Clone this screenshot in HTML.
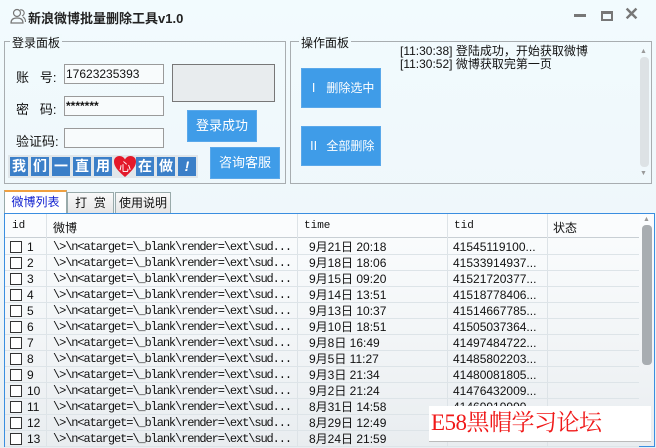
<!DOCTYPE html>
<html><head><meta charset="utf-8"><style>
*{margin:0;padding:0;box-sizing:border-box}
body{width:656px;height:448px;overflow:hidden;background:linear-gradient(180deg,#f2fbfe 0%,#eef6fa 60%,#e8eef2 100%);font-family:"Liberation Sans","Noto Sans CJK SC",sans-serif;font-size:12px;color:#111;position:relative}
.a{position:absolute}
.grp{position:absolute;border:1px solid #a8adb0}
.lg{position:absolute;top:-8px;left:8px;background:#f1fafd;padding:0 2px;font-size:12px}
.inp{position:absolute;height:20px;border:1px solid #9a9a9a;background:#f8fbfc;font-size:12px;line-height:18px;padding-left:1px}
.btn{position:absolute;background:#3f9ce8;color:#fff;font-size:12px;text-align:center;border:1px solid #5aa8ea}
.tile{position:absolute;top:157px;width:18px;height:19px;background:#3b7fc8;color:#fff;font-size:14px;font-weight:bold;text-align:center;line-height:19px}
.tab{position:absolute;top:192px;height:21px;border:1px solid #9aa;border-bottom:none;background:linear-gradient(#fafafa,#e6e6e6);font-size:12px;line-height:20px;text-align:center}
.row{position:absolute;left:5px;width:634px;height:16px;border-bottom:1px solid #dde4e8;font-size:12px;line-height:16px}
.row span{position:absolute;top:0;white-space:nowrap}
.row span.m{font-family:"Liberation Mono",monospace;letter-spacing:-1.1px}
.cb{position:absolute;left:5px;top:2px;width:12px;height:12px;border:1px solid #333;background:#fff}
</style></head><body>
<svg class="a" style="left:10px;top:8px" width="16" height="16" viewBox="0 0 16 16"><circle cx="7" cy="5" r="3.5" fill="none" stroke="#777" stroke-width="1.2"/><path d="M1 15c0-4 3-5 6-5s6 1 6 5z" fill="none" stroke="#777" stroke-width="1.2"/><path d="M10 2a3 3 0 0 1 2 6M13 9c2 1 2.5 3 2.5 5" fill="none" stroke="#777" stroke-width="1.1"/></svg>
<div class="a" style="left:28px;top:8px;font-size:13px;font-weight:bold;color:#222">新浪微博批量删除工具v1.0</div>
<div class="a" style="left:574px;top:14px;width:12px;height:3px;background:#777"></div>
<div class="a" style="left:601px;top:11px;width:12px;height:10px;border:2px solid #777;border-top-width:3px"></div>
<div class="a" style="left:624px;top:4px;font-size:18px;color:#777;font-weight:bold">✕</div>

<div class="grp" style="left:4px;top:41px;width:282px;height:143px"><div class="lg" style="left:5px">登录面板</div></div>
<div class="a" style="left:16px;top:67px;font-size:13px">账&nbsp;&nbsp;&nbsp;号:</div>
<div class="a" style="left:16px;top:99px;font-size:13px">密&nbsp;&nbsp;&nbsp;码:</div>
<div class="a" style="left:16px;top:131px;font-size:13px">验证码:</div>
<div class="inp" style="left:64px;top:64px;width:100px">17623235393</div>
<div class="inp" style="left:64px;top:96px;width:100px;font-weight:bold">*******</div>
<div class="inp" style="left:64px;top:128px;width:100px"></div>
<div class="a" style="left:172px;top:64px;width:103px;height:38px;border:1px solid #777;background:#e8ecee"></div>
<div class="btn" style="left:187px;top:110px;width:70px;height:32px;line-height:30px;font-size:13px">登录成功</div>
<div class="btn" style="left:210px;top:147px;width:70px;height:32px;line-height:30px;font-size:13px">咨询客服</div>
<div class="a" style="left:8px;top:155px;width:190px;height:23px;background:#e0e6ea"></div>
<div class="tile" style="left:10px">我</div><div class="tile" style="left:31px">们</div><div class="tile" style="left:52px">一</div><div class="tile" style="left:73px">直</div><div class="tile" style="left:94px">用</div>
<svg class="a" style="left:113px;top:154px" width="24" height="24" viewBox="0 0 24 24"><path d="M12 23C4 16 1 12 1 7.5 1 4 3.5 2 6.5 2 9 2 11 3.5 12 5.5 13 3.5 15 2 17.5 2 20.5 2 23 4 23 7.5 23 12 20 16 12 23z" fill="#e3192a"/><text x="12" y="17" font-size="12" fill="#fff" text-anchor="middle" font-family="Noto Sans CJK SC">心</text></svg>
<div class="tile" style="left:136px">在</div><div class="tile" style="left:157px">做</div><div class="tile" style="left:178px;font-style:italic">!</div>

<div class="grp" style="left:290px;top:41px;width:362px;height:143px"><div class="lg">操作面板</div></div>
<div class="btn" style="left:301px;top:68px;width:80px;height:40px;line-height:38px">Ⅰ&nbsp; 删除选中</div>
<div class="btn" style="left:301px;top:126px;width:80px;height:40px;line-height:38px">Ⅱ&nbsp; 全部删除</div>
<div class="a" style="left:400px;top:45px;font-size:12px;line-height:13px">[11:30:38] 登陆成功，开始获取微博<br>[11:30:52] 微博获取完第一页</div>
<div class="a" style="left:640px;top:48px;font-size:7px;color:#999">▲</div>
<div class="a" style="left:640px;top:57px;width:9px;height:110px;background:#dde2e5;border-radius:4px"></div>
<div class="a" style="left:640px;top:170px;font-size:7px;color:#999">▼</div>

<div class="tab" style="left:4px;top:190px;height:24px;width:63px;background:#fff;color:#1020d0;border-top:2px solid #f0a040;line-height:20px">微博列表</div>
<div class="tab" style="left:67px;width:47px">打&nbsp;&nbsp;赏</div>
<div class="tab" style="left:115px;width:56px">使用说明</div>

<div class="a" style="left:4px;top:213px;width:651px;height:234px;border:1px solid #3a8ee0;background:linear-gradient(180deg,#fbfdfe,#f1f4f6 60%,#e9edf0)"></div>
<div class="a" style="left:5px;top:214px;width:634px;height:24px;border-bottom:1px solid #c8cfd4;background:#fafcfd"></div>
<div class="a" style="left:12px;top:220px;font-family:'Liberation Mono',monospace;font-size:11px">id</div>
<div class="a" style="left:53px;top:219px">微博</div>
<div class="a" style="left:304px;top:220px;font-family:'Liberation Mono',monospace;font-size:11px">time</div>
<div class="a" style="left:454px;top:220px;font-family:'Liberation Mono',monospace;font-size:11px">tid</div>
<div class="a" style="left:553px;top:219px">状态</div>
<div class="a" style="left:46px;top:214px;width:1px;height:232px;background:#dde3e7"></div>
<div class="a" style="left:297px;top:214px;width:1px;height:232px;background:#dde3e7"></div>
<div class="a" style="left:447px;top:214px;width:1px;height:232px;background:#dde3e7"></div>
<div class="a" style="left:547px;top:214px;width:1px;height:232px;background:#dde3e7"></div>

<div class="row" style="top:239px"><div class="cb"></div><span style="left:22px">1</span><span class="m" style="left:48px">\&gt;\n&lt;atarget=\_blank\render=\ext\sud...</span><span style="left:304px">9月21日 20:18</span><span style="left:448px">41545119100...</span></div>
<div class="row" style="top:255px"><div class="cb"></div><span style="left:22px">2</span><span class="m" style="left:48px">\&gt;\n&lt;atarget=\_blank\render=\ext\sud...</span><span style="left:304px">9月18日 18:06</span><span style="left:448px">41533914937...</span></div>
<div class="row" style="top:271px"><div class="cb"></div><span style="left:22px">3</span><span class="m" style="left:48px">\&gt;\n&lt;atarget=\_blank\render=\ext\sud...</span><span style="left:304px">9月15日 09:20</span><span style="left:448px">41521720377...</span></div>
<div class="row" style="top:287px"><div class="cb"></div><span style="left:22px">4</span><span class="m" style="left:48px">\&gt;\n&lt;atarget=\_blank\render=\ext\sud...</span><span style="left:304px">9月14日 13:51</span><span style="left:448px">41518778406...</span></div>
<div class="row" style="top:303px"><div class="cb"></div><span style="left:22px">5</span><span class="m" style="left:48px">\&gt;\n&lt;atarget=\_blank\render=\ext\sud...</span><span style="left:304px">9月13日 10:37</span><span style="left:448px">41514667785...</span></div>
<div class="row" style="top:319px"><div class="cb"></div><span style="left:22px">6</span><span class="m" style="left:48px">\&gt;\n&lt;atarget=\_blank\render=\ext\sud...</span><span style="left:304px">9月10日 18:51</span><span style="left:448px">41505037364...</span></div>
<div class="row" style="top:335px"><div class="cb"></div><span style="left:22px">7</span><span class="m" style="left:48px">\&gt;\n&lt;atarget=\_blank\render=\ext\sud...</span><span style="left:304px">9月8日 16:49</span><span style="left:448px">41497484722...</span></div>
<div class="row" style="top:351px"><div class="cb"></div><span style="left:22px">8</span><span class="m" style="left:48px">\&gt;\n&lt;atarget=\_blank\render=\ext\sud...</span><span style="left:304px">9月5日 11:27</span><span style="left:448px">41485802203...</span></div>
<div class="row" style="top:367px"><div class="cb"></div><span style="left:22px">9</span><span class="m" style="left:48px">\&gt;\n&lt;atarget=\_blank\render=\ext\sud...</span><span style="left:304px">9月3日 21:34</span><span style="left:448px">41480081805...</span></div>
<div class="row" style="top:383px"><div class="cb"></div><span style="left:22px">10</span><span class="m" style="left:48px">\&gt;\n&lt;atarget=\_blank\render=\ext\sud...</span><span style="left:304px">9月2日 21:24</span><span style="left:448px">41476432009...</span></div>
<div class="row" style="top:399px"><div class="cb"></div><span style="left:22px">11</span><span class="m" style="left:48px">\&gt;\n&lt;atarget=\_blank\render=\ext\sud...</span><span style="left:304px">8月31日 14:58</span><span style="left:448px">41469919999...</span></div>
<div class="row" style="top:415px"><div class="cb"></div><span style="left:22px">12</span><span class="m" style="left:48px">\&gt;\n&lt;atarget=\_blank\render=\ext\sud...</span><span style="left:304px">8月29日 12:49</span></div>
<div class="row" style="top:431px"><div class="cb"></div><span style="left:22px">13</span><span class="m" style="left:48px">\&gt;\n&lt;atarget=\_blank\render=\ext\sud...</span><span style="left:304px">8月24日 21:59</span></div>

<div class="a" style="left:643px;top:216px;font-size:7px;color:#999">▲</div>
<div class="a" style="left:642px;top:225px;width:10px;height:140px;background:#a8adb1;border-radius:4px"></div>

<div class="a" style="left:429px;top:406px;width:222px;height:36px;background:#fff;border-bottom:1px solid #bbb"></div>
<div class="a" style="left:431px;top:404px;font-family:'Liberation Serif','Noto Serif CJK SC',serif;font-size:23px;color:#f01818;white-space:nowrap;letter-spacing:-0.5px">E58黑帽学习论坛</div>
</body></html>
